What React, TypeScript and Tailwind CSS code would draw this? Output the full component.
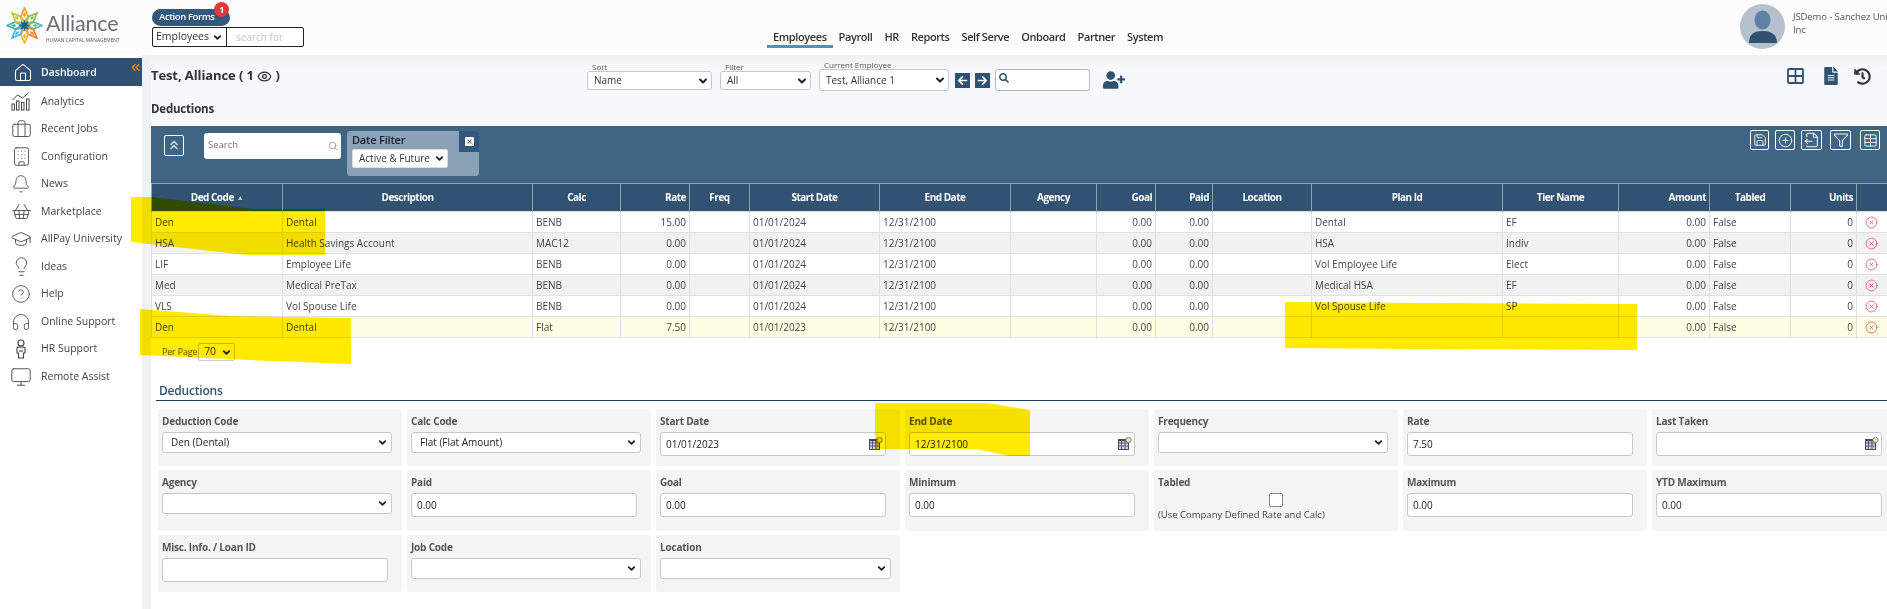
import React from "react";
import {
  Home, Briefcase, Building, Bell, ShoppingBasket, GraduationCap, Lightbulb, CircleHelp, Headphones, Monitor,
  ChevronsLeft, ChevronsUp, ChevronDown, Eye, Search, Save, CirclePlus, FileOutput, Funnel, Table, CircleX, X,
} from "lucide-react";
import { FaUserPlus, FaFileAlt, FaHistory, FaArrowLeft, FaArrowRight, FaSearch } from "react-icons/fa";

function Chev({ size = 11 }: { size?: number }) {
  return <ChevronDown size={size} strokeWidth={4} className="text-[#222] shrink-0" />;
}

function AnalyticsIcon() {
  return (
    <svg width="22" height="21" viewBox="0 0 21 21" fill="none" stroke="#444" strokeWidth="1">
      <path d="M2 9 L7 4 L12 7 L18 2" />
      <rect x="1.5" y="13" width="2.5" height="6" />
      <rect x="6" y="10" width="2.5" height="9" />
      <rect x="11" y="11.5" width="2.5" height="7.5" />
      <rect x="16" y="8" width="2.5" height="11" />
    </svg>
  );
}

function PersonIcon() {
  return (
    <svg width="20" height="20" viewBox="0 0 20 20" fill="none" stroke="#444" strokeWidth="1.1">
      <circle cx="10" cy="4" r="3" />
      <path d="M6 9 C6 7.5 14 7.5 14 9 L14 14 L12.5 14 L12.5 19 L7.5 19 L7.5 14 L6 14 Z" />
      <path d="M8 12 L12 12" />
    </svg>
  );
}

const nav: { label: string; icon: React.ReactNode }[] = [
  { label: "Analytics", icon: <AnalyticsIcon /> },
  { label: "Recent Jobs", icon: <Briefcase size={21} strokeWidth={1} className="text-[#444]" /> },
  { label: "Configuration", icon: <Building size={21} strokeWidth={1} className="text-[#444]" /> },
  { label: "News", icon: <Bell size={20} strokeWidth={1} className="text-[#444]" /> },
  { label: "Marketplace", icon: <ShoppingBasket size={21} strokeWidth={1} className="text-[#444]" /> },
  { label: "AllPay University", icon: <GraduationCap size={22} strokeWidth={1} className="text-[#444]" /> },
  { label: "Ideas", icon: <Lightbulb size={21} strokeWidth={1} className="text-[#444]" /> },
  { label: "Help", icon: <CircleHelp size={20} strokeWidth={1} className="text-[#444]" /> },
  { label: "Online Support", icon: <Headphones size={20} strokeWidth={1} className="text-[#444]" /> },
  { label: "HR Support", icon: <PersonIcon /> },
  { label: "Remote Assist", icon: <Monitor size={22} strokeWidth={1} className="text-[#444]" /> },
];

const tabs = ["Payroll", "HR", "Reports", "Self Serve", "Onboard", "Partner", "System"];

const cols = [
  { name: "Ded Code", w: "w-[131px]", h: "text-center" },
  { name: "Description", w: "w-[250px]", h: "text-center" },
  { name: "Calc", w: "w-[88px]", h: "text-center" },
  { name: "Rate", w: "w-[69px]", h: "text-right", r: true },
  { name: "Freq", w: "w-[60px]", h: "text-center" },
  { name: "Start Date", w: "w-[130px]", h: "text-center" },
  { name: "End Date", w: "w-[131px]", h: "text-center" },
  { name: "Agency", w: "w-[86px]", h: "text-center" },
  { name: "Goal", w: "w-[59px]", h: "text-right", r: true },
  { name: "Paid", w: "w-[57px]", h: "text-right", r: true },
  { name: "Location", w: "w-[99px]", h: "text-center" },
  { name: "Plan Id", w: "w-[191px]", h: "text-center" },
  { name: "Tier Name", w: "w-[116px]", h: "text-center" },
  { name: "Amount", w: "w-[91px]", h: "text-right", r: true },
  { name: "Tabled", w: "w-[81px]", h: "text-center" },
  { name: "Units", w: "w-[66px]", h: "text-right", r: true },
  { name: "", w: "w-[31px]", h: "text-center" },
];

const rows = [
  ["Den", "Dental", "BENB", "15.00", "", "01/01/2024", "12/31/2100", "", "0.00", "0.00", "", "Dental", "EF", "0.00", "False", "0"],
  ["HSA", "Health Savings Account", "MAC12", "0.00", "", "01/01/2024", "12/31/2100", "", "0.00", "0.00", "", "HSA", "Indiv", "0.00", "False", "0"],
  ["LIF", "Employee Life", "BENB", "0.00", "", "01/01/2024", "12/31/2100", "", "0.00", "0.00", "", "Vol Employee Life", "Elect", "0.00", "False", "0"],
  ["Med", "Medical PreTax", "BENB", "0.00", "", "01/01/2024", "12/31/2100", "", "0.00", "0.00", "", "Medical HSA", "EF", "0.00", "False", "0"],
  ["VLS", "Vol Spouse Life", "BENB", "0.00", "", "01/01/2024", "12/31/2100", "", "0.00", "0.00", "", "Vol Spouse Life", "SP", "0.00", "False", "0"],
  ["Den", "Dental", "Flat", "7.50", "", "01/01/2023", "12/31/2100", "", "0.00", "0.00", "", "", "", "0.00", "False", "0"],
];
const rowBg = ["bg-white", "bg-[#f1f1f1]", "bg-white", "bg-[#f1f1f1]", "bg-white", "bg-[#fffde3]"];

function CalIcon() {
  return (
    <svg width="14" height="13" viewBox="0 0 14 13" className="absolute right-[2px] top-[4px]">
      <rect x="0.5" y="2.5" width="10" height="10" fill="#cfcbe0" stroke="#4a4468" />
      <path d="M3.5 3V12M7 3V12M1 6H10M1 9H10" stroke="#4a4468" strokeWidth="0.8" />
      <rect x="0.5" y="2.5" width="10" height="1.6" fill="#4a4468" />
      <circle cx="10.5" cy="3" r="2.7" fill="#e5e1c8" stroke="#6b6b4a" strokeWidth="0.8" />
    </svg>
  );
}

function Sel({ value, w }: { value?: string; w: string }) {
  return (
    <div className={`${w} h-[21px] bg-white border border-[#c8c8c8] rounded-[3px] flex items-center justify-between pl-[8px] pr-[3px] text-[10px] text-[#222]`}>
      <span>{value}</span>
      <Chev />
    </div>
  );
}

function Inp({ value, w, cal }: { value?: string; w: string; cal?: boolean }) {
  return (
    <div className={`${w} relative h-[24px] bg-white border border-[#c8c8c8] rounded-[3px] flex items-center pl-[5px] text-[10px] text-[#222]`}>
      <span>{value}</span>
      {cal && <CalIcon />}
    </div>
  );
}

function Card({ label, h, children }: { label: string; h: string; children?: React.ReactNode }) {
  return (
    <div className={`${h} bg-[#f4f4f4] rounded-[2px] px-[4px]`}>
      <div className="h-[23px] pt-[5px] text-[10px] tracking-[-0.2px] leading-[15px] font-bold text-[#555]">{label}</div>
      {children}
    </div>
  );
}

function ToolBtn({ w, ml, children }: { w: string; ml: string; children: React.ReactNode }) {
  return (
    <div className={`${w} ${ml} h-[20px] border border-white rounded-[2px] flex items-center justify-center text-[#eef3f7]`}>
      {children}
    </div>
  );
}

function Logo() {
  const colors = ["#f5a02c", "#8cc152", "#5bbf9a", "#f58220", "#fbb03b", "#4db8e8", "#3fb5b0", "#c9c53a"];
  return (
    <svg width="37" height="37" viewBox="-18.5 -18.5 37 37" className="shrink-0">
      {colors.map((c, i) => (
        <g key={i} transform={`rotate(${i * 45})`}>
          <path d="M0 -3 L3.6 -9 L0 -17.5 L-3.6 -9 Z" fill="none" stroke={c} strokeWidth="1.7" />
          <path d="M0 -8 L1.6 -10.5 L0 -13.5 L-1.6 -10.5 Z" fill={c} />
        </g>
      ))}
      {[0, 90, 45, 135].map((a) => (
        <path key={a} d="M0 -6 L2 0 L0 6 L-2 0 Z" fill="#1f5a85" transform={`rotate(${a})`} />
      ))}
    </svg>
  );
}

export default function App() {
  return (
    <div className="relative w-[1887px] h-[609px] overflow-hidden bg-white font-['Open_Sans','Liberation_Sans',sans-serif] text-[#333]">
      {/* Top header */}
      <header className="h-[55px] bg-[#fcfcfc] flex items-start">
        <div className="w-[152px] pl-[6px] pt-[7px] flex items-start gap-[3px]">
          <Logo />
          <div className="flex flex-col">
            <span className="text-[21.5px] leading-[26px] tracking-[-0.2px] font-normal text-[#6d6e71] font-['Lato',sans-serif] mt-[3px]">Alliance</span>
            <span className="text-[4.9px] leading-[6px] text-[#555] whitespace-nowrap mt-[1px]">HUMAN CAPITAL MANAGEMENT</span>
          </div>
        </div>
        <div className="w-[152px] pt-[9px] flex flex-col">
          <div className="relative w-[78px] h-[17px] rounded-[9px] bg-[#33587b] text-white text-[9.5px] tracking-[-0.4px] font-semibold flex items-center pl-[7px]">
            Action Forms
            <span className="absolute right-[1px] top-[-7px] w-[15px] h-[15px] rounded-full bg-[#e5383b] text-white text-[9px] font-bold flex items-center justify-center">1</span>
          </div>
          <div className="mt-[1px] h-[20px] border border-[#222] rounded-[2px] flex items-center bg-white text-[10.5px]">
            <div className="w-[74px] h-full border-r border-[#222] pl-[3px] pr-[3px] flex items-center justify-between text-[#333]">
              <span>Employees</span>
              <Chev />
            </div>
            <span className="pl-[9px] text-[10px] text-[#c4c4c4]">search for</span>
          </div>
        </div>
        <nav className="ml-[463px] pt-[28px] flex items-start text-[11px] tracking-[-0.4px] font-semibold text-[#333]">
          <div className="px-[6px] h-[20px] border-b-[3px] border-[#5f8cb0] leading-[18px]">Employees</div>
          {tabs.map((t) => (
            <span key={t} className="px-[6px] leading-[18px]">{t}</span>
          ))}
        </nav>
        <div className="ml-auto pt-[4px] flex items-start w-[147px]">
          <svg width="45" height="45" viewBox="0 0 45 45" className="shrink-0">
            <circle cx="22.5" cy="22.5" r="22.5" fill="#b5c0cd" />
            <ellipse cx="22.5" cy="16" rx="8" ry="9.5" fill="#5f80a5" />
            <path d="M9 39 C9 30 14 27 22.5 27 C31 27 37 30 37 39 Z" fill="#2f5272" />
          </svg>
          <div className="ml-[8px] w-[94px] shrink-0 text-[9.5px] leading-[13px] tracking-[-0.1px] text-[#555] whitespace-nowrap pt-[6px]">
            <div>JSDemo - Sanchez Uni</div>
            <div>Inc</div>
          </div>
        </div>
      </header>

      <div className="flex">
        {/* Sidebar */}
        <aside className="relative w-[142px] pt-[3px] bg-white shrink-0 h-[554px]">
          <div className="h-[28px] pt-[2px] bg-[#2f5272] flex items-center text-white text-[10.5px] font-semibold pl-[13px] gap-[8px]">
            <Home size={20} strokeWidth={1.3} />
            <span>Dashboard</span>
          </div>
          <ChevronsLeft size={13} strokeWidth={3} className="absolute right-[0px] top-[6px] text-[#e8821e]" />
          <div className="pt-[2px]">
            {nav.map((n) => (
              <div key={n.label} className="h-[27.5px] flex items-center text-[10.5px] text-[#444]">
                <div className="w-[41px] flex justify-center pl-[1px] shrink-0">{n.icon}</div>
                <span>{n.label}</span>
              </div>
            ))}
          </div>
        </aside>
        <div className="w-[9px] bg-[#f0f1f3] shrink-0 h-[554px]" />

        {/* Main */}
        <main className="w-[1736px] shrink-0">
          {/* Toolbar */}
          <div className="h-[71px] bg-gradient-to-b from-[#eeeff1] to-[#f7f8fa] to-[16%] flex items-start">
            <div className="w-[436px] shrink-0 pt-[11px]">
              <div className="flex items-center h-[20px] text-[13px] tracking-[-0.1px] font-bold text-[#333]">
                <span className="whitespace-pre">Test, Alliance ( 1 </span>
                <Eye size={15} strokeWidth={2} className="text-[#333]" />
                <span className="whitespace-pre"> )</span>
              </div>
              <div className="mt-[13px] text-[11.5px] tracking-[-0.2px] leading-[20px] font-bold text-[#333]">Deductions</div>
            </div>
            <div className="w-[125px] shrink-0 pt-[7px]">
              <div className="pl-[5px] h-[9px] text-[8px] leading-[9px] text-[#555]">Sort</div>
              <div className="h-[19px] bg-white border border-[#c8c8c8] rounded-[3px] flex items-center justify-between pl-[6px] pr-[2px] text-[10px] text-[#333]">
                <span>Name</span>
                <Chev size={12} />
              </div>
            </div>
            <div className="ml-[8px] w-[91px] shrink-0 pt-[7px]">
              <div className="pl-[5px] h-[9px] text-[8px] leading-[9px] text-[#555]">Filter</div>
              <div className="h-[19px] bg-white border border-[#c8c8c8] rounded-[3px] flex items-center justify-between pl-[6px] pr-[2px] text-[10px] text-[#333]">
                <span>All</span>
                <Chev size={12} />
              </div>
            </div>
            <div className="ml-[8px] w-[130px] shrink-0 pt-[5px]">
              <div className="pl-[5px] h-[9px] text-[8px] leading-[9px] text-[#555] whitespace-nowrap">Current Employee</div>
              <div className="h-[22px] bg-white border border-[#c8c8c8] rounded-[3px] flex items-center justify-between pl-[6px] pr-[2px] text-[10px] text-[#333]">
                <span>Test, Alliance 1</span>
                <Chev size={12} />
              </div>
            </div>
            <div className="ml-[6px] pt-[18px] flex gap-[5px]">
              <div className="w-[15px] h-[15px] bg-[#2f5272] flex items-center justify-center text-white"><FaArrowLeft size={11} /></div>
              <div className="w-[15px] h-[15px] bg-[#2f5272] flex items-center justify-center text-white"><FaArrowRight size={11} /></div>
            </div>
            <div className="ml-[5px] mt-[13.5px] w-[95px] h-[22px] bg-white border border-[#b5b5b5] rounded-[3px] flex items-start pl-[3px] pt-[3px]">
              <FaSearch size={10} className="text-[#2f5272]" />
            </div>
            <FaUserPlus size={22} className="ml-[13px] mt-[14px] text-[#2f5272]" />
            <div className="ml-auto mr-[16px] pt-[12px] flex items-center text-[#2f5272]">
              <svg width="17" height="16" viewBox="0 0 17 16" fill="none" stroke="#2f5272" strokeWidth="1.8">
                <rect x="1" y="1" width="15" height="14" rx="1" />
                <path d="M8.5 1V15M1 8H16" />
              </svg>
              <FaFileAlt size={18} className="ml-[18px]" />
              <FaHistory size={17} className="ml-[14px] text-[#333]" />
            </div>
          </div>

          {/* Panel */}
          <div className="h-[57px] bg-[#406583] flex items-start">
            <div className="ml-[13px] mt-[8.5px] w-[20px] h-[21px] border border-white rounded-[2px] flex items-center justify-center text-[#c3d0dc]">
              <ChevronsUp size={14} strokeWidth={3} />
            </div>
            <div className="ml-[20px] mt-[6.5px] w-[137px] h-[26px] bg-white rounded-[3px] flex items-center justify-between pl-[4px] pr-[3px] text-[9.5px] text-[#777]">
              <span>Search</span>
              <Search size={10} className="text-[#999]" />
            </div>
            <div className="ml-[6px] mt-[5px] w-[132px] h-[45px] bg-[#8aa2b8] rounded-[3px] flex items-start overflow-hidden">
              <div className="w-[112px] pl-[5px] pt-[1px]">
                <div className="text-[11px] tracking-[-0.2px] leading-[15px] font-semibold text-[#223]">Date Filter</div>
                <div className="mt-[2px] w-[96px] h-[19px] bg-white rounded-[2px] border border-[#ddd] flex items-center justify-between pl-[6px] pr-[2px] text-[10px] text-[#333]">
                  <span>Active &amp; Future</span>
                  <Chev />
                </div>
              </div>
              <div className="w-[20px] h-[21px] bg-[#33587b] flex items-center justify-center">
                <div className="w-[9px] h-[9px] bg-white rounded-[1px] flex items-center justify-center">
                  <X size={7} strokeWidth={3.5} className="text-[#33587b]" />
                </div>
              </div>
            </div>
            <div className="ml-auto mr-[7px] mt-[4px] flex">
              <ToolBtn w="w-[19px]" ml="ml-0"><Save size={14} strokeWidth={1.6} /></ToolBtn>
              <ToolBtn w="w-[20px]" ml="ml-[6px]"><CirclePlus size={15} strokeWidth={1.6} /></ToolBtn>
              <ToolBtn w="w-[21px]" ml="ml-[6px]"><FileOutput size={16} strokeWidth={1.6} /></ToolBtn>
              <ToolBtn w="w-[21px]" ml="ml-[8px]"><Funnel size={16} strokeWidth={1.6} /></ToolBtn>
              <ToolBtn w="w-[20px]" ml="ml-[9px]"><Table size={15} strokeWidth={1.6} /></ToolBtn>
            </div>
          </div>

          {/* Table */}
          <table className="w-[1736px] table-fixed border-collapse text-[10px]">
            <colgroup>
              {cols.map((c, i) => (
                <col key={i} className={c.w} />
              ))}
            </colgroup>
            <thead>
              <tr className="h-[28px] bg-[#315272] text-white">
                {cols.map((c, i) => (
                  <th key={i} className={`${c.h} border-x border-t border-[#93a2b1] px-[3px] text-[10px] tracking-[-0.5px] font-bold whitespace-nowrap`}>
                    {c.name}
                    {i === 0 && <span className="ml-[3px] text-[7px] text-[#ccc] align-[1px]">▲</span>}
                  </th>
                ))}
              </tr>
            </thead>
            <tbody>
              {rows.map((r, ri) => (
                <tr key={ri} className={`h-[21px] ${rowBg[ri]}`}>
                  {r.map((v, ci) => (
                    <td key={ci} className={`border border-[#e0e0e0] px-[3px] text-[#444] whitespace-nowrap ${cols[ci].r ? "text-right" : "text-left"}`}>
                      {v}
                    </td>
                  ))}
                  <td className="border border-[#e0e0e0] px-0">
                    <div className="flex justify-center pr-[1px]">
                      <CircleX size={13} strokeWidth={1.5} className="text-[#e2575b]" />
                    </div>
                  </td>
                </tr>
              ))}
            </tbody>
          </table>

          {/* Per page */}
          <div className="ml-[11px] mt-[5px] flex items-center text-[9px] tracking-[-0.2px] text-[#555]">
            <span>Per Page</span>
            <div className="ml-[1px] w-[37px] h-[18px] bg-white border border-[#ccc] rounded-[2px] flex items-center justify-between pl-[5px] pr-[2px] text-[10.5px] text-[#333]">
              <span>70</span>
              <Chev />
            </div>
          </div>

          {/* Form */}
          <div className="ml-[5px] mt-[21px] border-b border-[#1e3f5f] h-[19px] pl-[3px] text-[12px] tracking-[-0.2px] leading-[17px] font-semibold text-[#2e5272]">Deductions</div>
          <div className="ml-[7px] mt-[8px] grid grid-cols-[repeat(7,244px)] gap-x-[5px] gap-y-[4px] w-[1760px]">
            <Card label="Deduction Code" h="h-[57px]"><Sel value="Den (Dental)" w="w-[230px]" /></Card>
            <Card label="Calc Code" h="h-[57px]"><Sel value="Flat (Flat Amount)" w="w-[230px]" /></Card>
            <Card label="Start Date" h="h-[57px]"><Inp value="01/01/2023" w="w-[226px]" cal /></Card>
            <Card label="End Date" h="h-[57px]"><Inp value="12/31/2100" w="w-[226px]" cal /></Card>
            <Card label="Frequency" h="h-[57px]"><Sel w="w-[230px]" /></Card>
            <Card label="Rate" h="h-[57px]"><Inp value="7.50" w="w-[226px]" /></Card>
            <Card label="Last Taken" h="h-[57px]"><Inp w="w-[226px]" cal /></Card>

            <Card label="Agency" h="h-[61px]"><Sel w="w-[230px]" /></Card>
            <Card label="Paid" h="h-[61px]"><Inp value="0.00" w="w-[226px]" /></Card>
            <Card label="Goal" h="h-[61px]"><Inp value="0.00" w="w-[226px]" /></Card>
            <Card label="Minimum" h="h-[61px]"><Inp value="0.00" w="w-[226px]" /></Card>
            <Card label="Tabled" h="h-[61px]">
              <div className="flex flex-col items-center w-[236px]">
                <div className="w-[14px] h-[14px] bg-white border border-[#888] rounded-[2px]" />
                <div className="text-[9.5px] leading-[14px] text-[#444] w-full whitespace-nowrap mt-[1px]">(Use Company Defined Rate and Calc)</div>
              </div>
            </Card>
            <Card label="Maximum" h="h-[61px]"><Inp value="0.00" w="w-[226px]" /></Card>
            <Card label="YTD Maximum" h="h-[61px]"><Inp value="0.00" w="w-[226px]" /></Card>

            <Card label="Misc. Info. / Loan ID" h="h-[57px]"><Inp w="w-[226px]" /></Card>
            <Card label="Job Code" h="h-[57px]"><Sel w="w-[230px]" /></Card>
            <Card label="Location" h="h-[57px]"><Sel w="w-[231px]" /></Card>
          </div>
        </main>
      </div>

      {/* Hand-drawn highlighter marks over the screenshot */}
      <svg width="1887" height="609" className="absolute left-0 top-0 pointer-events-none mix-blend-multiply">
        <g fill="#ffea00">
          <polygon points="131,197 152,197 253,209 325,209 325,255 247,255 131,242" />
          <polygon points="140,309 230,316 351,318 351,364 250,360 140,355" />
          <polygon points="1285,302 1420,303 1637,304 1637,350 1420,349 1285,348" />
          <polygon points="875,403 987,403 1030,410 1030,456 1010,456 976,449 875,449" />
        </g>
      </svg>
    </div>
  );
}
